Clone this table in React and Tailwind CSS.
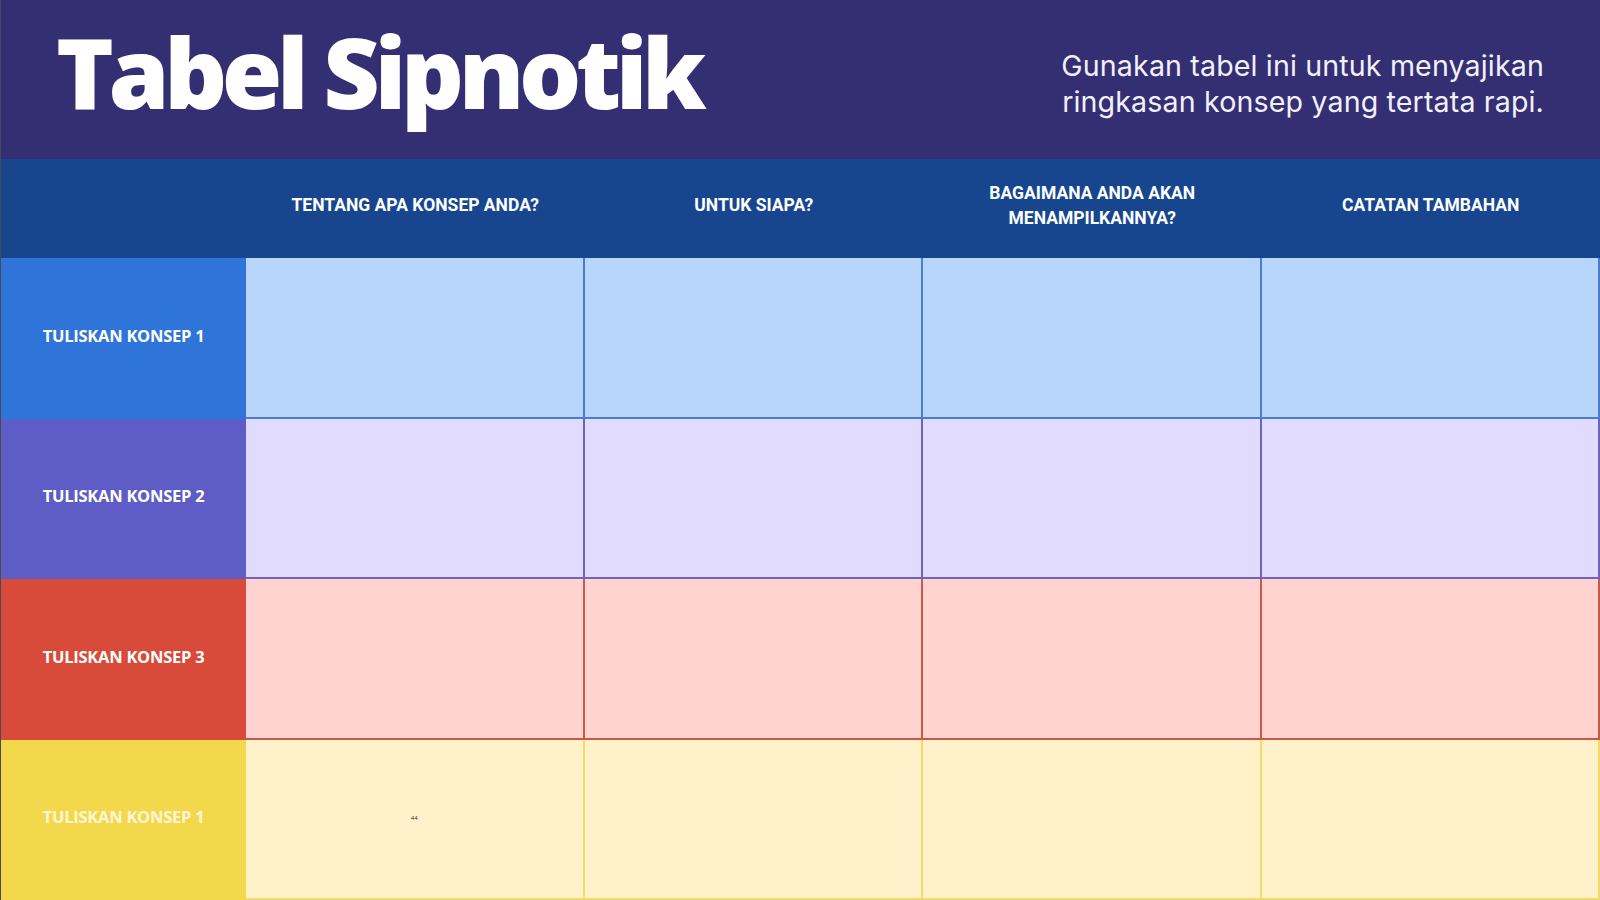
import React from "react";

const columns = [
  ["TENTANG APA KONSEP ANDA?"],
  ["UNTUK SIAPA?"],
  ["BAGAIMANA ANDA AKAN", "MENAMPILKANNYA?"],
  ["CATATAN TAMBAHAN"],
];

const rows = [
  { label: "TULISKAN KONSEP 1", side: "bg-[#2f74d8] text-white", cell: "bg-[#b8d5fc] border-[#4a7dd2]" },
  { label: "TULISKAN KONSEP 2", side: "bg-[#5e5cc5] text-white", cell: "bg-[#e0dbff] border-[#6d64c0]" },
  { label: "TULISKAN KONSEP 3", side: "bg-[#d84a3a] text-white", cell: "bg-[#ffd4d0] border-[#c9574b]" },
  { label: "TULISKAN KONSEP 1", side: "bg-[#f4d84c] text-[#fff6d6]", cell: "bg-[#fff2cb] border-[#f0dc66]" },
];

const App = () => {
  return (
    <div className="w-[1600px] h-[900px] flex flex-col overflow-hidden border-l border-[#4a4a55]">
      {/* title bar */}
      <div className="h-[159px] shrink-0 bg-[#342f72] flex items-center justify-between pl-[55px] pr-[56px]">
        <h1 className="text-white text-[98px] leading-none font-extrabold tracking-[-0.055em] pb-[18px] font-['Open_Sans',sans-serif]">
          Tabel Sipnotik
        </h1>
        <p className="text-[#f2f1fb] text-[28.6px] leading-[36px] text-right font-['Inter',sans-serif] tracking-[0.005em] pt-[8px]">
          Gunakan tabel ini untuk menyajikan
          <br />
          ringkasan konsep yang tertata rapi.
        </p>
      </div>

      {/* table */}
      <div className="flex-1 grid grid-cols-[245px_repeat(4,1fr)] grid-rows-[99px_repeat(4,1fr)]">
        <div className="bg-[#17468f]" />
        {columns.map((lines, i) => (
          <div
            key={i}
            className="bg-[#17468f] flex flex-col items-center justify-center text-white text-[17.5px] leading-[25px] font-bold text-center font-['Roboto',sans-serif] pb-[6px]"
          >
            {lines.map((l) => (
              <span key={l}>{l}</span>
            ))}
          </div>
        ))}

        {rows.map((row, r) => (
          <React.Fragment key={r}>
            <div
              className={`${row.side} flex items-center justify-center text-[16.5px] font-bold font-['Open_Sans',sans-serif] tracking-[-0.015em] pb-[4px]`}
            >
              {row.label}
            </div>
            {columns.map((_, c) => (
              <div
                key={c}
                className={`${row.cell} border-r-2 border-b-2 flex items-center justify-center`}
              >
                {r === 3 && c === 0 && (
                  <span className="text-[6px] text-[#333] font-['Open_Sans',sans-serif]">44</span>
                )}
              </div>
            ))}
          </React.Fragment>
        ))}
      </div>
    </div>
  );
};

export default App;
